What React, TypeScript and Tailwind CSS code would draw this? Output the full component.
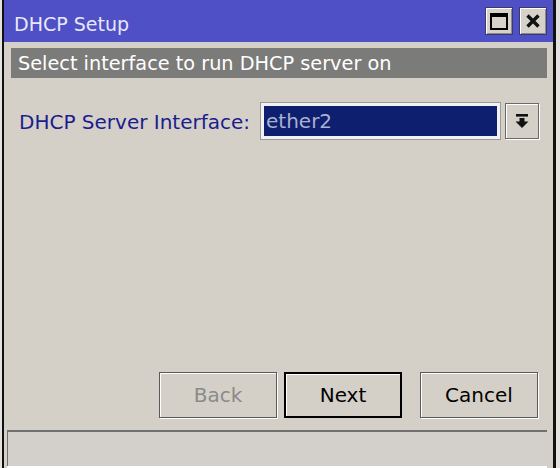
import React from 'react';

const face = 'bg-[#d4d0c8]';

function TitleButton({ children }: { children: React.ReactNode }) {
  return (
    <div className="flex h-[28px] w-[28px] items-center justify-center border border-[#3a3a70] bg-[#d6d2ca] shadow-[inset_1px_1px_0_#ffffff,inset_-1px_-1px_0_#8a8a8a]">
      {children}
    </div>
  );
}

function WinButton({ label, isDefault, disabled }: { label: string; isDefault?: boolean; disabled?: boolean }) {
  return (
    <button
      className={`flex h-[46px] w-[118px] items-center justify-center text-[20px] ${
        isDefault
          ? 'border-2 border-black shadow-[inset_1px_1px_0_#ffffff]'
          : 'border border-[#5a5a5a] shadow-[inset_1px_1px_0_#ffffff,1px_1px_0_#ffffff]'
      } ${disabled ? 'text-[#8a8a8a]' : 'text-black'} ${face}`}
    >
      {label}
    </button>
  );
}

export default function App() {
  return (
    <div
      className="flex h-[468px] w-[560px] overflow-hidden bg-[#e4e2de]"
      style={{ fontFamily: '"DejaVu Sans", Verdana, sans-serif' }}
    >
      <div className="ml-[2px] w-[2px] bg-[#111]" />
      <div className="flex w-[549px] flex-col">
        {/* title bar */}
        <div className="flex h-[42px] shrink-0 items-center justify-between bg-[#4f4fc6] pl-[10px] pr-[6px]">
          <span className="pt-[6px] text-[19px] text-[#e8e8f8]">DHCP Setup</span>
          <div className="flex gap-[6px]">
            <TitleButton>
              <div className="h-[17px] w-[18px] border-2 border-t-[4px] border-black bg-[#d6d2ca]" />
            </TitleButton>
            <TitleButton>
              <svg width="16" height="16" viewBox="0 0 16 16">
                <path d="M2.5 2.5 L13.5 13.5 M13.5 2.5 L2.5 13.5" stroke="#111" strokeWidth="3.4" />
              </svg>
            </TitleButton>
          </div>
        </div>

        <div className={`flex flex-1 flex-col ${face}`}>
          {/* header strip */}
          <div className="ml-[7px] mr-[6px] mt-[6px] flex h-[30px] items-center bg-[#7b7b79] pl-[7px] pt-[3px] text-[19.3px] text-white">
            Select interface to run DHCP server on
          </div>

          {/* interface row */}
          <div className="mt-[25px] flex items-center">
            <span className="ml-[15px] w-[242px] pt-[1px] text-[20px] text-[#1c1c8e]">DHCP Server Interface:</span>
            <div className="flex h-[36px] w-[239px] items-center border-[3px] border-[#f2f2f2] bg-[#0d1f6e] pl-[2px] shadow-[0_0_0_1px_#9a9a9a]">
              <span className="text-[20px] text-[#a9b2cf]">ether2</span>
            </div>
            <div className="ml-[5px] flex h-[36px] w-[34px] items-center justify-center border border-[#6a6a6a] shadow-[inset_1px_1px_0_#ffffff,1px_1px_0_#ffffff]">
              <svg width="14" height="16" viewBox="0 0 14 16">
                <rect x="1" y="1" width="12" height="2.6" fill="#111" />
                <rect x="4.5" y="5" width="5" height="4" fill="#111" />
                <path d="M0.5 8.5 H13.5 L7 15 Z" fill="#111" />
              </svg>
            </div>
          </div>

          <div className="flex-1" />

          {/* buttons */}
          <div className="flex pl-[155px]">
            <WinButton label="Back" disabled />
            <div className="ml-[7px]">
              <WinButton label="Next" isDefault />
            </div>
            <div className="ml-[18px]">
              <WinButton label="Cancel" />
            </div>
          </div>

          {/* status bar */}
          <div className="ml-[3px] mr-[6px] mt-[12px] h-[36px] border-l border-t-2 border-[#707070] bg-[#d3d0cb] shadow-[0_2px_0_#ffffff]" />
          <div className="h-[2px]" />
        </div>
      </div>
      <div className="w-[3px] bg-[#111]" />
    </div>
  );
}
